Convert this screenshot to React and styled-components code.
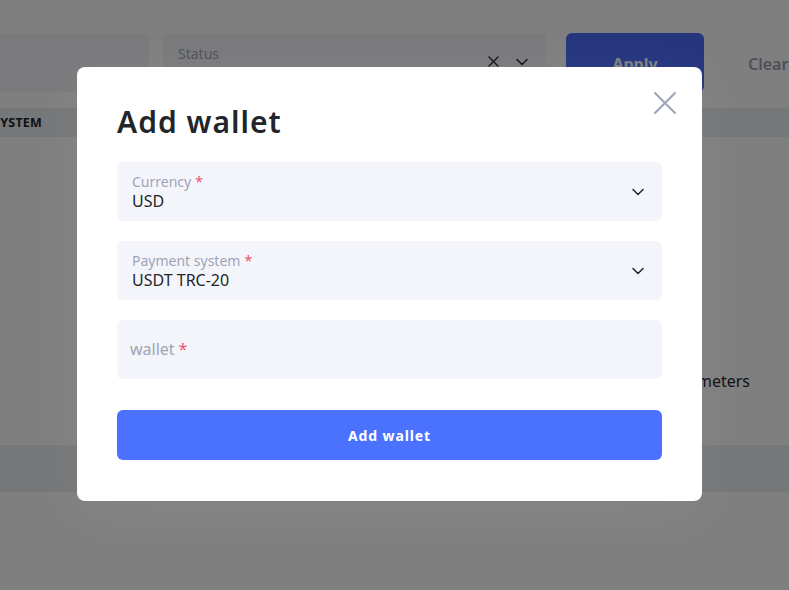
import React from "react";
import styled, { createGlobalStyle } from "styled-components";

const Global = createGlobalStyle`
  html, body { margin: 0; padding: 0; }
  body {
    width: 789px; height: 590px; overflow: hidden;
    background: #ffffff;
    font-family: "Noto Sans", "Open Sans", sans-serif;
    color: #222529;
  }
  * { box-sizing: border-box; }
`;

const Page = styled.div`
  width: 789px;
  height: 590px;
  overflow: hidden;
  position: relative;
  padding-top: 33px;
`;

const FilterRow = styled.div`
  display: flex;
  align-items: stretch;
  gap: 14px;
  margin-left: -200px;
  height: 59px;
`;

const FilterBox = styled.div`
  width: ${(p) => p.$w}px;
  flex: none;
  background: #f4f5fa;
  border-radius: 6px;
  padding: 12px 15px 10px;
  position: relative;
  display: flex;
  align-items: center;
`;

const FilterText = styled.div`
  flex: 1;
  display: flex;
  flex-direction: column;
  align-self: flex-start;
`;

const FilterLabel = styled.span`
  font-size: 14px;
  color: #9ea3b8;
  line-height: 18px;
`;

const FilterValue = styled.span`
  font-size: 16px;
  line-height: 20px;
  color: #222529;
`;

const FilterIcons = styled.div`
  display: flex;
  align-items: center;
  gap: 17px;
  margin-right: 3px;
  margin-top: -4px;
`;

const ApplyButton = styled.div`
  width: 138px;
  flex: none;
  margin-left: 6px;
  background: #4a6cff;
  border-radius: 6px;
  color: #ffffff;
  font-weight: 700;
  font-size: 16px;
  display: flex;
  align-items: center;
  justify-content: center;
  padding-top: 2px;
`;

const ClearLink = styled.div`
  margin-left: 30px;
  font-size: 16px;
  font-weight: 600;
  color: #9aa0b4;
  display: flex;
  align-items: center;
  padding-top: 2px;
`;

const TableHead = styled.div`
  margin-top: 16px;
  height: 29px;
  background: #eceef2;
  display: flex;
  align-items: center;
`;

const HeadCell = styled.div`
  width: 42px;
  display: flex;
  justify-content: flex-end;
  white-space: nowrap;
  font-size: 12.5px;
  font-weight: 700;
  letter-spacing: 0.2px;
  text-transform: uppercase;
  color: #222529;
`;

const TableBody = styled.div`
  height: 308px;
  display: flex;
  align-items: flex-end;
  justify-content: flex-end;
  padding-bottom: 53px;
`;

const EmptyText = styled.span`
  font-size: 16px;
  color: #222529;
  margin-right: 39px;
  white-space: nowrap;
`;

const TableFoot = styled.div`
  height: 47px;
  background: #eceef2;
`;

const Overlay = styled.div`
  position: absolute;
  inset: 0;
  background: rgba(0, 0, 0, 0.5);
  display: flex;
  justify-content: flex-start;
  align-items: flex-start;
  padding: 67px 0 0 77px;
`;

const Modal = styled.div`
  width: 625px;
  background: #ffffff;
  border-radius: 8px;
  padding: 37px 40px 41px 40px;
  position: relative;
  box-shadow: 0 10px 60px rgba(255, 255, 255, 0.06);
`;

const CloseButton = styled.button`
  position: absolute;
  top: 24px;
  right: 25px;
  width: 24px;
  height: 24px;
  padding: 0;
  border: none;
  background: none;
  display: flex;
  align-items: center;
  justify-content: center;
`;

const Title = styled.h2`
  margin: 0 0 22px 0;
  font-size: 30px;
  line-height: 36px;
  font-weight: 600;
  color: #222529;
  letter-spacing: 1px;
`;

const Fields = styled.div`
  display: flex;
  flex-direction: column;
  gap: 20px;
`;

const Field = styled.div`
  height: 59px;
  background: #f4f5fa;
  border-radius: 6px;
  display: flex;
  align-items: center;
  padding: 0 18px 0 ${(p) => (p.$inset ? 13 : 15)}px;
`;

const FieldText = styled.div`
  flex: 1;
  display: flex;
  flex-direction: column;
`;

const Label = styled.span`
  font-size: 14px;
  line-height: 18px;
  color: #9ea3b8;
`;

const Placeholder = styled.span`
  font-size: 16px;
  line-height: 20px;
  color: #9ea3b8;
  margin-top: -2px;
`;

const Star = styled.span`
  color: #f0506e;
  margin-left: 4px;
`;

const Value = styled.span`
  font-size: 16px;
  line-height: 20px;
  color: #222529;
`;

const SubmitButton = styled.button`
  margin-top: 31px;
  width: 100%;
  height: 50px;
  border: none;
  border-radius: 6px;
  background: #4a72ff;
  color: #ffffff;
  font-family: inherit;
  font-size: 14px;
  font-weight: 700;
  letter-spacing: 0.9px;
  cursor: pointer;
`;

const Chevron = ({ color = "#222529" }) => (
  <svg width="12" height="8" viewBox="0 0 12 8" fill="none">
    <path d="M1 1.5L6 6.5L11 1.5" stroke={color} strokeWidth="1.5" strokeLinecap="round" strokeLinejoin="round" />
  </svg>
);

const SmallX = () => (
  <svg width="11" height="11" viewBox="0 0 11 11" fill="none">
    <path d="M1 1L10 10M10 1L1 10" stroke="#222529" strokeWidth="1.3" strokeLinecap="round" />
  </svg>
);

const BigX = () => (
  <svg width="24" height="24" viewBox="0 0 24 24" fill="none">
    <path d="M2 2L22 22M22 2L2 22" stroke="#9da3b8" strokeWidth="2" strokeLinecap="round" />
  </svg>
);

export default function App() {
  return (
    <>
      <Global />
      <Page>
        <FilterRow>
          <FilterBox $w={349} />
          <FilterBox $w={383}>
            <FilterText>
              <FilterLabel>Status</FilterLabel>
              <FilterValue>All</FilterValue>
            </FilterText>
            <FilterIcons>
              <SmallX />
              <Chevron />
            </FilterIcons>
          </FilterBox>
          <ApplyButton>Apply</ApplyButton>
          <ClearLink>Clear</ClearLink>
        </FilterRow>
        <TableHead>
          <HeadCell>Payment system</HeadCell>
        </TableHead>
        <TableBody>
          <EmptyText>No data matching the specified parameters</EmptyText>
        </TableBody>
        <TableFoot />
        <Overlay>
          <Modal>
            <CloseButton aria-label="Close">
              <BigX />
            </CloseButton>
            <Title>Add wallet</Title>
            <Fields>
              <Field>
                <FieldText>
                  <Label>
                    Currency<Star>*</Star>
                  </Label>
                  <Value>USD</Value>
                </FieldText>
                <Chevron />
              </Field>
              <Field>
                <FieldText>
                  <Label>
                    Payment system<Star>*</Star>
                  </Label>
                  <Value>USDT TRC-20</Value>
                </FieldText>
                <Chevron />
              </Field>
              <Field $inset>
                <FieldText>
                  <Placeholder>
                    wallet<Star>*</Star>
                  </Placeholder>
                </FieldText>
              </Field>
            </Fields>
            <SubmitButton>Add wallet</SubmitButton>
          </Modal>
        </Overlay>
      </Page>
    </>
  );
}
